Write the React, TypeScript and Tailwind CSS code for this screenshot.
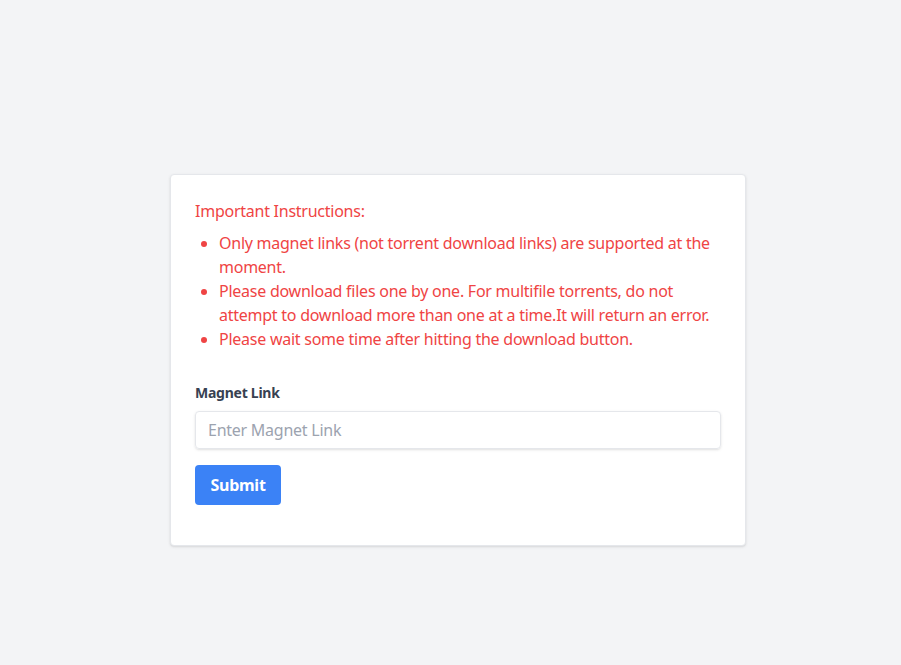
export default function App() {
  return (
    <div
      className="min-h-screen bg-[#f3f4f6] pt-[174px] pl-[15px] flex justify-center items-start tracking-[-0.25px]"
      style={{ fontFamily: '"Noto Sans", "Open Sans", sans-serif' }}
    >
      <div className="w-[576px] bg-white border border-[#e5e7eb] rounded shadow-sm px-6 pt-6 pb-10">
        <div className="text-[#ef4444] text-base leading-6">
          <p className="mb-2">Important Instructions:</p>
          <ul className="list-disc pl-6">
            <li>Only magnet links (not torrent download links) are supported at the moment.</li>
            <li>
              Please download files one by one. For multifile torrents, do not attempt to download more than one at a time.It will return an error.
            </li>
            <li>Please wait some time after hitting the download button.</li>
          </ul>
        </div>

        <form className="mt-8" onSubmit={(e) => e.preventDefault()}>
          <label className="block text-sm leading-5 font-bold text-[#374151] mb-2">Magnet Link</label>
          <input
            type="text"
            placeholder="Enter Magnet Link"
            className="w-full h-[38px] px-3 text-base border border-[#e5e7eb] rounded shadow-sm placeholder:text-[#9ca3af] outline-none"
          />
          <button
            type="submit"
            className="mt-4 h-10 w-[86px] bg-[#3b82f6] text-white font-bold rounded"
          >
            Submit
          </button>
        </form>
      </div>
    </div>
  );
}
